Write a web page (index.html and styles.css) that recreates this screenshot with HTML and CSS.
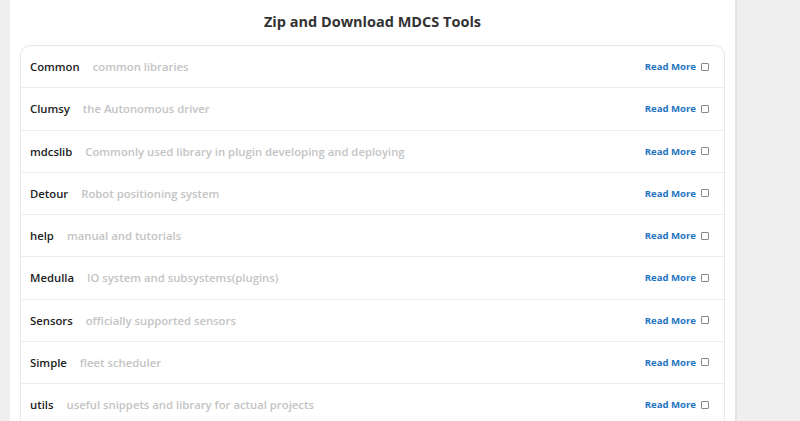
FILE: index.html
```html
<html>
<head>
	<link rel="stylesheet" href="styles.css">
</head>
<body>
	<div class="panel">
		<h1 class="title">Zip and Download MDCS Tools</h1>
		<div class="toollist">
			<div class="tool">
				<span class="name">Common</span>
				<span class="desc">common libraries</span>
				<a class="more">Read More</a><span class="box"></span>
			</div>
			<div class="tool">
				<span class="name">Clumsy</span>
				<span class="desc">the Autonomous driver</span>
				<a class="more">Read More</a><span class="box"></span>
			</div>
			<div class="tool">
				<span class="name">mdcslib</span>
				<span class="desc">Commonly used library in plugin developing and deploying</span>
				<a class="more">Read More</a><span class="box"></span>
			</div>
			<div class="tool">
				<span class="name">Detour</span>
				<span class="desc">Robot positioning system</span>
				<a class="more">Read More</a><span class="box"></span>
			</div>
			<div class="tool">
				<span class="name">help</span>
				<span class="desc">manual and tutorials</span>
				<a class="more">Read More</a><span class="box"></span>
			</div>
			<div class="tool">
				<span class="name">Medulla</span>
				<span class="desc">IO system and subsystems(plugins)</span>
				<a class="more">Read More</a><span class="box"></span>
			</div>
			<div class="tool">
				<span class="name">Sensors</span>
				<span class="desc">officially supported sensors</span>
				<a class="more">Read More</a><span class="box"></span>
			</div>
			<div class="tool">
				<span class="name">Simple</span>
				<span class="desc">fleet scheduler</span>
				<a class="more">Read More</a><span class="box"></span>
			</div>
			<div class="tool">
				<span class="name">utils</span>
				<span class="desc">useful snippets and library for actual projects</span>
				<a class="more">Read More</a><span class="box"></span>
			</div>
		</div>
	</div>
</body>
</html>
```

FILE: styles.css
```css
body{margin:0; background-color:#efefef; font-family:"Open Sans", "Noto Sans", sans-serif; overflow:hidden;}
.panel{margin-left:10px; width:727px; height:421px; overflow:hidden; background-color:#fff; border-right:2px solid #e4e4e4; padding:0 10px 0 10px; box-sizing:border-box;}
.title{margin:0; padding-top:12px; height:45px; box-sizing:border-box; text-align:center; font-size:14.5px; font-weight:700; color:#333;}
.toollist{border:1px solid #e8e8e8; border-bottom:none; border-radius:10px 10px 0 0;}
.tool{display:flex; align-items:center; height:41.25px; padding:0 15px 0 9px; border-top:1px solid #ececec; font-size:11.3px; font-weight:600;}
.tool:first-child{border-top:none; height:41.25px;}
.name{color:#222; margin-right:13px;}
.desc{color:#c4c4c4; flex:1;}
.more{color:#1f74c2; font-size:9.6px; font-weight:700; cursor:pointer;}
.box{width:6px; height:6px; margin-left:5px; border:1px solid #888; border-radius:1px;}
```
